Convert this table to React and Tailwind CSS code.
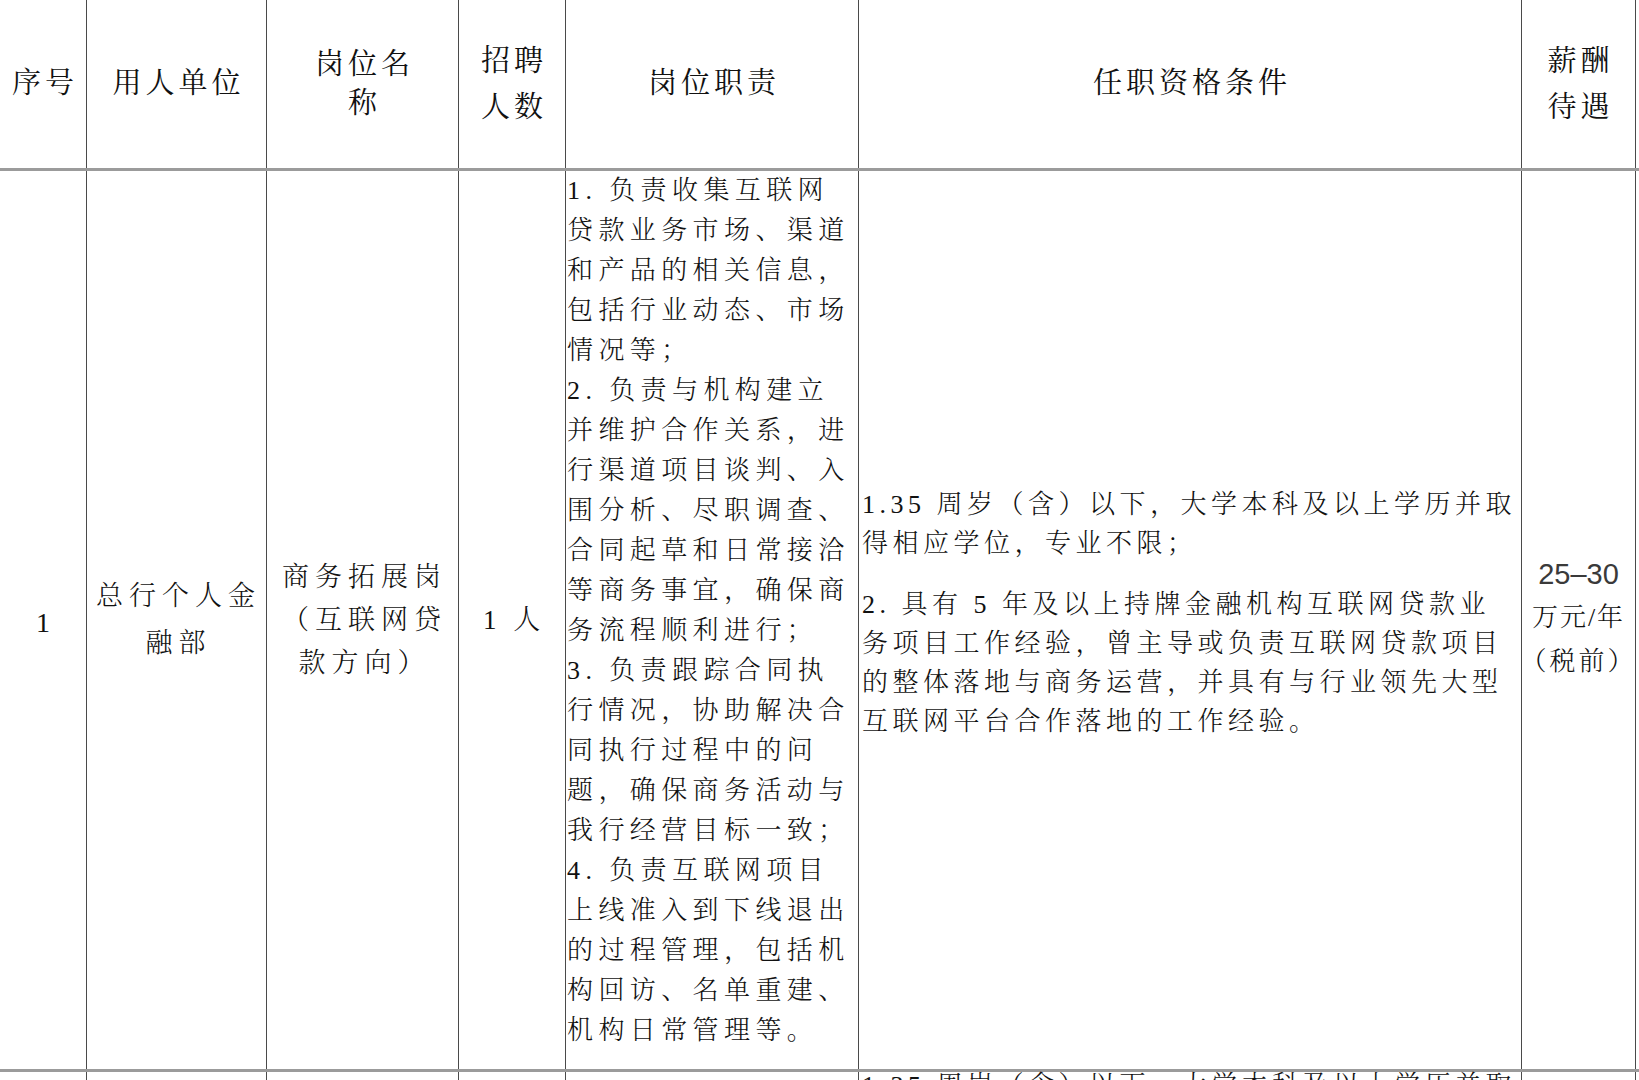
const duty = [
  "1. 负责收集互联网",
  "贷款业务市场、渠道",
  "和产品的相关信息，",
  "包括行业动态、市场",
  "情况等；",
  "2. 负责与机构建立",
  "并维护合作关系，进",
  "行渠道项目谈判、入",
  "围分析、尽职调查、",
  "合同起草和日常接洽",
  "等商务事宜，确保商",
  "务流程顺利进行；",
  "3. 负责跟踪合同执",
  "行情况，协助解决合",
  "同执行过程中的问",
  "题，确保商务活动与",
  "我行经营目标一致；",
  "4. 负责互联网项目",
  "上线准入到下线退出",
  "的过程管理，包括机",
  "构回访、名单重建、",
  "机构日常管理等。",
];

const qual = [
  ["1.35 周岁（含）以下，大学本科及以上学历并取", "得相应学位，专业不限；"],
  [
    "2. 具有 5 年及以上持牌金融机构互联网贷款业",
    "务项目工作经验，曾主导或负责互联网贷款项目",
    "的整体落地与商务运营，并具有与行业领先大型",
    "互联网平台合作落地的工作经验。",
  ],
];

const cell = "border-r-[1.5px] border-[#4a4a4a]";

function Lines({ lines, className }) {
  return (
    <div className={className}>
      {lines.map((l) => (
        <div key={l} className="whitespace-nowrap">
          {l}
        </div>
      ))}
    </div>
  );
}

export default function App() {
  return (
    <div className="w-[1639px] h-[1080px] overflow-hidden bg-white text-[#111] font-['Liberation_Serif','Noto_Serif_CJK_SC','Noto_Sans_CJK_SC',serif]">
      {/* header */}
      <div className="grid grid-cols-[87px_180px_192px_107px_293px_663px_114px] h-[171px] border-b-[3px] border-[#9b9b9b] text-[29px] tracking-[4px]">
        <div className={`${cell} flex items-center justify-center pl-1`}>序号</div>
        <div className={`${cell} flex items-center justify-center pl-1`}>用人单位</div>
        <div className={`${cell} flex items-center justify-center pl-1`}>
          <Lines lines={["岗位名", "称"]} className="text-center leading-[39px]" />
        </div>
        <div className={`${cell} flex items-center justify-center pl-1`}>
          <Lines lines={["招聘", "人数"]} className="text-center leading-[46px]" />
        </div>
        <div className={`${cell} flex items-center justify-center pl-1`}>岗位职责</div>
        <div className={`${cell} flex items-center justify-center pl-1`}>任职资格条件</div>
        <div className={`${cell} flex items-center justify-center pl-1`}>
          <Lines lines={["薪酬", "待遇"]} className="text-center leading-[46px]" />
        </div>
      </div>

      {/* row 1 */}
      <div className="grid grid-cols-[87px_180px_192px_107px_293px_663px_114px] h-[901px] border-b-[3px] border-[#9b9b9b] font-light">
        <div className={`${cell} flex items-center justify-center text-[28px] pt-[6px]`}>1</div>
        <div className={`${cell} flex items-center justify-center pl-1`}>
          <Lines
            lines={["总行个人金", "融部"]}
            className="text-center text-[27px] tracking-[6px] leading-[47px]"
          />
        </div>
        <div className={`${cell} flex items-center justify-center pl-1`}>
          <Lines
            lines={["商务拓展岗", "（互联网贷", "款方向）"]}
            className="text-center text-[27px] tracking-[6px] leading-[43px]"
          />
        </div>
        <div className={`${cell} flex items-center justify-center text-[27px] tracking-[5px] pl-1`}>
          1 人
        </div>
        <div className={`${cell} pl-[1px] pt-0`}>
          <Lines lines={duty} className="text-[26px] tracking-[5.4px] leading-[40px]" />
        </div>
        <div className={`${cell} flex flex-col justify-center gap-[22px] pl-[3px] pb-[14px]`}>
          {qual.map((p) => (
            <Lines key={p[0]} lines={p} className="text-[26px] tracking-[4.5px] leading-[39px]" />
          ))}
        </div>
        <div className={`${cell} flex flex-col items-center justify-center pb-[4px] leading-[44px] text-[26px]`}>
          <div className="font-['Liberation_Sans',sans-serif] font-normal text-[29px] text-[#3a3a3a]">25–30</div>
          <div className="whitespace-nowrap tracking-[2px]">万元/年</div>
          <div className="whitespace-nowrap tracking-[3px]">（税前）</div>
        </div>
      </div>

      {/* row 2, cut off by the bottom edge */}
      <div className="grid grid-cols-[87px_180px_192px_107px_293px_663px_114px] h-[120px] font-light">
        <div className={cell}></div>
        <div className={cell}></div>
        <div className={cell}></div>
        <div className={cell}></div>
        <div className={cell}></div>
        <div className={`${cell} pl-[3px] pt-[1px]`}>
          <div className="whitespace-nowrap text-[26px] tracking-[4.5px] leading-[26px]">
            1.35 周岁（含）以下，大学本科及以上学历并取
          </div>
        </div>
        <div className={cell}></div>
      </div>
    </div>
  );
}
